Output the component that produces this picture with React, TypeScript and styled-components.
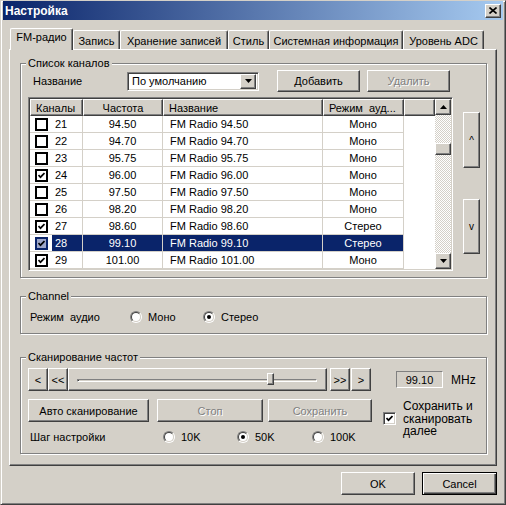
import React from 'react'
import styled, { createGlobalStyle, css } from 'styled-components'

const GlobalStyle = createGlobalStyle`
  html, body {
    margin: 0;
    padding: 0;
    background: #fff;
  }
  body {
    font-family: 'Liberation Sans', Arial, sans-serif;
    font-size: 11px;
    color: #000;
  }
  * {
    box-sizing: border-box;
  }
`

const raised = css`
  border: 1px solid;
  border-color: #fff #404040 #404040 #fff;
  box-shadow: inset -1px -1px #808080, inset 1px 1px #d4d0c8;
  background: #d4d0c8;
`

const sunken = css`
  border: 1px solid;
  border-color: #808080 #fff #fff #808080;
  box-shadow: inset 1px 1px #404040, inset -1px -1px #d4d0c8;
`

type Channel = { num: number; freq: string; mode: string; checked: boolean }

const channels: Channel[] = [
  { num: 21, freq: '94.50', mode: 'Моно', checked: false },
  { num: 22, freq: '94.70', mode: 'Моно', checked: false },
  { num: 23, freq: '95.75', mode: 'Моно', checked: false },
  { num: 24, freq: '96.00', mode: 'Моно', checked: true },
  { num: 25, freq: '97.50', mode: 'Моно', checked: false },
  { num: 26, freq: '98.20', mode: 'Моно', checked: false },
  { num: 27, freq: '98.60', mode: 'Стерео', checked: true },
  { num: 28, freq: '99.10', mode: 'Стерео', checked: true },
  { num: 29, freq: '101.00', mode: 'Моно', checked: true },
]
const selectedNum = 28

const tabs = [
  { label: 'FM-радио', width: 63 },
  { label: 'Запись', width: 47 },
  { label: 'Хранение записей', width: 108 },
  { label: 'Стиль', width: 41 },
  { label: 'Системная информация', width: 134 },
  { label: 'Уровень ADC', width: 81 },
]

export default function App() {
  return (
    <>
      <GlobalStyle />
      <Window>
        <TitleBar>
          <TitleText>Настройка</TitleText>
          <CloseButton>
            <svg width="8" height="7" viewBox="0 0 8 7">
              <path d="M0.5 0.5 L7.5 6.5 M7.5 0.5 L0.5 6.5" stroke="#000" strokeWidth="1.6" />
            </svg>
          </CloseButton>
        </TitleBar>

        <Body>
          <TabStrip>
            {tabs.map((t, i) => (
              <Tab key={t.label} width={t.width} active={i === 0}>
                {t.label}
              </Tab>
            ))}
          </TabStrip>

          <Panel>
            <GroupBox pad="6px 9px 6px 7px">
              <GroupTitle>Список каналов</GroupTitle>
              <TopRow>
                <NameLabel>Название</NameLabel>
                <Combo>
                  <ComboText>По умолчанию</ComboText>
                  <ComboButton>
                    <DownArrow />
                  </ComboButton>
                </Combo>
                <Button width={83} height={22} style={{ marginLeft: 18 }}>
                  Добавить
                </Button>
                <Button width={83} height={22} disabled style={{ marginLeft: 7 }}>
                  Удалить
                </Button>
              </TopRow>

              <ListRow>
                <ListView>
                  <Table>
                    <HeaderRow>
                      <HeaderCell>Каналы</HeaderCell>
                      <HeaderCell align="center">Частота</HeaderCell>
                      <HeaderCell>Название</HeaderCell>
                      <HeaderCell>Режим&nbsp; ауд...</HeaderCell>
                      <HeaderCell />
                    </HeaderRow>
                    {channels.map((c) => {
                      const sel = c.num === selectedNum
                      return (
                        <DataRow key={c.num}>
                          <Cell>
                            <ListCheck selected={sel}>
                              {c.checked && <CheckMark />}
                            </ListCheck>
                            <NumText selected={sel}>{c.num}</NumText>
                          </Cell>
                          <Cell selected={sel} align="center">
                            {c.freq}
                          </Cell>
                          <Cell selected={sel} pad={7}>
                            FM Radio {c.freq}
                          </Cell>
                          <Cell selected={sel} align="center">
                            {c.mode}
                          </Cell>
                          <EmptyCell />
                        </DataRow>
                      )
                    })}
                  </Table>
                  <ScrollBar>
                    <ScrollButton>
                      <UpArrow />
                    </ScrollButton>
                    <ScrollTrack>
                      <ScrollThumb />
                    </ScrollTrack>
                    <ScrollButton>
                      <DownArrow />
                    </ScrollButton>
                  </ScrollBar>
                </ListView>

                <SideButtons>
                  <SideButton height={56} top={15}>^</SideButton>
                  <SideButton height={55} top={31}>v</SideButton>
                </SideButtons>
              </ListRow>
            </GroupBox>

            <GroupBox pad="11px 7px 7px 7px" style={{ marginTop: 18 }}>
              <GroupTitle>Channel</GroupTitle>
              <OptionRow>
                <RowLabel width={102}>Режим&nbsp; аудио</RowLabel>
                <RadioOption width={73}>
                  <Radio />
                  Моно
                </RadioOption>
                <RadioOption width={73}>
                  <Radio checked />
                  Стерео
                </RadioOption>
              </OptionRow>
            </GroupBox>

            <GroupBox pad="10px 7px 8px 7px" style={{ marginTop: 23 }}>
              <GroupTitle>Сканирование частот</GroupTitle>
              <ScanRow>
                <Button width={20} height={23}>&lt;</Button>
                <Button width={20} height={23}>&lt;&lt;</Button>
                <SliderFrame>
                  <SliderTrack />
                  <SliderThumb />
                </SliderFrame>
                <Button width={20} height={23} style={{ marginLeft: 3 }}>
                  &gt;&gt;
                </Button>
                <Button width={20} height={23} style={{ marginLeft: 1 }}>
                  &gt;
                </Button>
                <FreqBox>99.10</FreqBox>
                <Unit>MHz</Unit>
              </ScanRow>

              <ScanBottom>
                <ScanColumn>
                  <ButtonRow>
                    <Button width={121} height={23}>
                      Авто сканирование
                    </Button>
                    <Button width={106} height={23} disabled style={{ marginLeft: 8 }}>
                      Стоп
                    </Button>
                    <Button width={104} height={23} disabled style={{ marginLeft: 5 }}>
                      Сохранить
                    </Button>
                  </ButtonRow>
                  <StepRow>
                    <RowLabel width={135}>Шаг настройки</RowLabel>
                    <RadioOption width={74}>
                      <Radio />
                      10K
                    </RadioOption>
                    <RadioOption width={75}>
                      <Radio checked />
                      50K
                    </RadioOption>
                    <RadioOption width={60}>
                      <Radio />
                      100K
                    </RadioOption>
                  </StepRow>
                </ScanColumn>
                <SaveOption>
                  <Check>
                    <CheckMark />
                  </Check>
                  <SaveText>
                    Сохранить и
                    <br />
                    сканировать
                    <br />
                    далее
                  </SaveText>
                </SaveOption>
              </ScanBottom>
            </GroupBox>
          </Panel>

          <Footer>
            <Button width={74} height={23}>
              OK
            </Button>
            <DefaultButton>Cancel</DefaultButton>
          </Footer>
        </Body>
      </Window>
    </>
  )
}

const CheckMark = () => (
  <svg width="7" height="7" viewBox="0 0 7 7">
    <path d="M0.5 3 L2.5 5.2 L6.5 1" stroke="#000" strokeWidth="1.7" fill="none" />
  </svg>
)

const UpArrow = () => (
  <svg width="7" height="4" viewBox="0 0 7 4">
    <path d="M3.5 0 L7 4 L0 4 Z" fill="#000" />
  </svg>
)

const DownArrow = () => (
  <svg width="7" height="4" viewBox="0 0 7 4">
    <path d="M0 0 L7 0 L3.5 4 Z" fill="#000" />
  </svg>
)

type RadioProps = { checked?: boolean }
const Radio = ({ checked }: RadioProps) => (
  <RadioOuter>
    <RadioInner>{checked && <RadioDot />}</RadioInner>
  </RadioOuter>
)

const Window = styled.div`
  width: 506px;
  height: 505px;
  background: #d4d0c8;
  border: 1px solid;
  border-color: #d4d0c8 #404040 #404040 #d4d0c8;
  box-shadow: inset 1px 1px #fff, inset -1px -1px #808080;
  padding: 0 2px 2px 2px;
  display: flex;
  flex-direction: column;
`

const TitleBar = styled.div`
  height: 19px;
  display: flex;
  align-items: center;
  justify-content: space-between;
  padding: 0 2px 0 2px;
  background: linear-gradient(to right, #0a246a, #a6caf0);
`

const TitleText = styled.span`
  color: #fff;
  font-weight: bold;
  font-size: 12px;
`

const CloseButton = styled.div`
  ${raised};
  width: 16px;
  height: 14px;
  display: flex;
  align-items: center;
  justify-content: center;
`

const Body = styled.div`
  display: flex;
  flex-direction: column;
  padding: 8px 6px 0 6px;
`

const TabStrip = styled.div`
  display: flex;
  align-items: flex-end;
  height: 21px;
  padding-left: 1px;
  position: relative;
  z-index: 1;
`

const Tab = styled.div<{ width: number; active?: boolean }>`
  width: ${(p) => p.width}px;
  height: ${(p) => (p.active ? 22 : 19)}px;
  margin-bottom: ${(p) => (p.active ? -1 : 0)}px;
  padding-top: ${(p) => (p.active ? 2 : 4)}px;
  line-height: 13px;
  text-align: center;
  white-space: nowrap;
  background: #d4d0c8;
  border-top: 1px solid #fff;
  border-left: 1px solid #fff;
  border-right: 1px solid #404040;
  border-radius: 2px 2px 0 0;
  box-shadow: inset -1px 0 #808080;
`

const Panel = styled.div`
  height: 417px;
  display: flex;
  flex-direction: column;
  border: 1px solid;
  border-color: #fff #404040 #404040 #fff;
  box-shadow: inset -1px -1px #808080;
  padding: 13px 9px 0 10px;
`

const GroupBox = styled.div<{ pad: string }>`
  position: relative;
  border: 1px solid #808080;
  box-shadow: inset 1px 1px #fff, 1px 1px #fff;
  padding: ${(p) => p.pad};
  display: flex;
  flex-direction: column;
`

const GroupTitle = styled.span`
  position: absolute;
  top: -7px;
  left: 5px;
  padding: 0 2px;
  line-height: 13px;
  background: #d4d0c8;
`

const TopRow = styled.div`
  display: flex;
  align-items: center;
  height: 22px;
`

const NameLabel = styled.span`
  width: 99px;
  padding-left: 5px;
`

const Combo = styled.div`
  ${sunken};
  width: 132px;
  height: 19px;
  background: #fff;
  display: flex;
  align-items: center;
  padding: 2px;
`

const ComboText = styled.span`
  flex: 1;
  padding-left: 2px;
`

const ComboButton = styled.div`
  ${raised};
  width: 16px;
  height: 15px;
  display: flex;
  align-items: center;
  justify-content: center;
`

const Button = styled.div<{ width: number; height: number; disabled?: boolean }>`
  ${raised};
  width: ${(p) => p.width}px;
  height: ${(p) => p.height}px;
  display: flex;
  align-items: center;
  justify-content: center;
  white-space: nowrap;
  flex: none;
  color: ${(p) => (p.disabled ? '#808080' : '#000')};
  text-shadow: ${(p) => (p.disabled ? '1px 1px #fff' : 'none')};
`

const DefaultButton = styled.div`
  width: 75px;
  height: 23px;
  border: 1px solid #000;
  background: #d4d0c8;
  box-shadow: inset 1px 1px #fff, inset -1px -1px #404040, inset -2px -2px #808080;
  display: flex;
  align-items: center;
  justify-content: center;
`

const ListRow = styled.div`
  display: flex;
  margin-top: 5px;
  gap: 10px;
`

const ListView = styled.div`
  ${sunken};
  width: 425px;
  height: 174px;
  padding: 1px;
  background: #fff;
  display: flex;
`

const Table = styled.div`
  width: 405px;
  display: flex;
  flex-direction: column;
`

const columns = '53px 80px 160px 81px 31px'

const HeaderRow = styled.div`
  display: grid;
  grid-template-columns: ${columns};
  height: 17px;
`

const HeaderCell = styled.div<{ align?: string }>`
  ${raised};
  display: flex;
  align-items: center;
  justify-content: ${(p) => (p.align === 'center' ? 'center' : 'flex-start')};
  padding-left: ${(p) => (p.align === 'center' ? 0 : 5)}px;
  white-space: nowrap;
  overflow: hidden;
`

const DataRow = styled.div`
  display: grid;
  grid-template-columns: ${columns};
  height: 17px;
`

const Cell = styled.div<{ selected?: boolean; align?: string; pad?: number }>`
  display: flex;
  align-items: center;
  justify-content: ${(p) => (p.align === 'center' ? 'center' : 'flex-start')};
  padding-left: ${(p) => p.pad ?? 0}px;
  border-right: 1px solid #d4d0c8;
  border-bottom: 1px solid #d4d0c8;
  white-space: nowrap;
  background: ${(p) => (p.selected ? '#0a246a' : '#fff')};
  color: ${(p) => (p.selected ? '#fff' : '#000')};
`

const EmptyCell = styled.div`
  background: #fff;
`

const ListCheck = styled.div<{ selected?: boolean }>`
  width: 13px;
  height: 13px;
  margin-left: 5px;
  flex: none;
  border: 2px solid ${(p) => (p.selected ? '#0a246a' : '#000')};
  background: ${(p) => (p.selected ? '#9ea7c9' : '#fff')};
  display: flex;
  align-items: center;
  justify-content: center;
`

const NumText = styled.span<{ selected?: boolean }>`
  align-self: stretch;
  flex: 1;
  margin-left: 4px;
  padding-left: 3px;
  display: flex;
  align-items: center;
  background: ${(p) => (p.selected ? '#0a246a' : 'transparent')};
  color: ${(p) => (p.selected ? '#fff' : '#000')};
`

const ScrollBar = styled.div`
  width: 16px;
  display: flex;
  flex-direction: column;
`

const ScrollButton = styled.div`
  ${raised};
  width: 16px;
  height: 16px;
  flex: none;
  display: flex;
  align-items: center;
  justify-content: center;
`

const ScrollTrack = styled.div`
  flex: 1;
  background: conic-gradient(#fff 25%, #d4d0c8 0 50%, #fff 0 75%, #d4d0c8 0) 0 0 / 2px 2px;
`

const ScrollThumb = styled.div`
  ${raised};
  width: 16px;
  height: 12px;
  margin-top: 28px;
`

const SideButtons = styled.div`
  display: flex;
  flex-direction: column;
`

const SideButton = styled.div<{ height: number; top: number }>`
  ${raised};
  width: 17px;
  height: ${(p) => p.height}px;
  margin-top: ${(p) => p.top}px;
  display: flex;
  align-items: center;
  justify-content: center;
  font-size: 10px;
`

const OptionRow = styled.div`
  display: flex;
  align-items: center;
  height: 18px;
`

const RowLabel = styled.span<{ width: number }>`
  width: ${(p) => p.width}px;
  padding-left: 2px;
  flex: none;
  white-space: nowrap;
`

const RadioOption = styled.div<{ width: number }>`
  width: ${(p) => p.width}px;
  flex: none;
  display: flex;
  align-items: center;
  gap: 6px;
`

const RadioOuter = styled.div`
  width: 12px;
  height: 12px;
  border-radius: 50%;
  border: 1px solid;
  border-color: #808080 #fff #fff #808080;
  flex: none;
`

const RadioInner = styled.div`
  width: 10px;
  height: 10px;
  border-radius: 50%;
  border: 1px solid;
  border-color: #404040 #d4d0c8 #d4d0c8 #404040;
  background: #fff;
  display: flex;
  align-items: center;
  justify-content: center;
`

const RadioDot = styled.div`
  width: 4px;
  height: 4px;
  border-radius: 50%;
  background: #000;
`

const ScanRow = styled.div`
  display: flex;
  align-items: center;
  height: 23px;
`

const SliderFrame = styled.div`
  ${raised};
  position: relative;
  width: 259px;
  height: 23px;
  flex: none;
  display: flex;
  align-items: center;
  padding: 0 9px 0 8px;
`

const SliderTrack = styled.div`
  flex: 1;
  height: 3px;
  border-top: 1px solid #808080;
  border-left: 1px solid #808080;
  border-bottom: 1px solid #fff;
  border-right: 1px solid #fff;
  box-shadow: inset 1px 0 #404040;
  margin-top: 1px;
`

const SliderThumb = styled.div`
  ${raised};
  position: absolute;
  left: 198px;
  top: 4px;
  width: 7px;
  height: 12px;
`

const FreqBox = styled.div`
  width: 47px;
  height: 17px;
  margin-left: 25px;
  border: 1px solid;
  border-color: #808080 #fff #fff #808080;
  display: flex;
  align-items: center;
  justify-content: center;
`

const Unit = styled.span`
  margin-left: 8px;
  font-size: 12px;
`

const ScanBottom = styled.div`
  display: flex;
  margin-top: 8px;
`

const ScanColumn = styled.div`
  width: 344px;
  display: flex;
  flex-direction: column;
`

const ButtonRow = styled.div`
  display: flex;
  height: 23px;
`

const StepRow = styled.div`
  display: flex;
  align-items: center;
  height: 16px;
  margin-top: 7px;
`

const SaveOption = styled.div`
  display: flex;
  align-items: center;
  gap: 7px;
  margin-left: 11px;
  align-self: flex-start;
  margin-top: 1px;
`

const Check = styled.div`
  ${sunken};
  width: 13px;
  height: 13px;
  background: #fff;
  display: flex;
  align-items: center;
  justify-content: center;
`

const SaveText = styled.div`
  line-height: 12.5px;
  font-size: 12px;
`

const Footer = styled.div`
  display: flex;
  justify-content: flex-end;
  gap: 7px;
  margin-top: 6px;
`
